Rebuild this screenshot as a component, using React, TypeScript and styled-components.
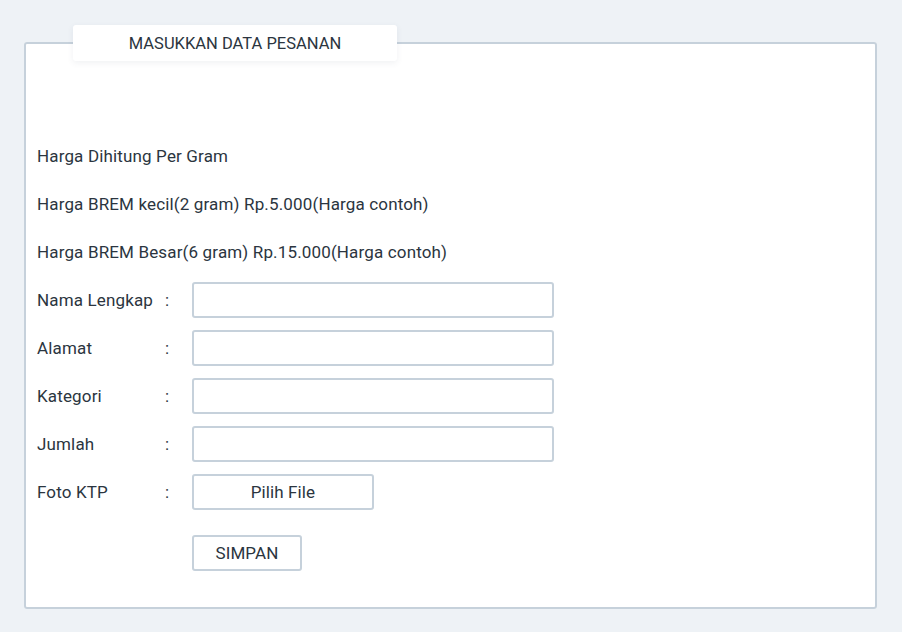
import React from "react";
import styled, { createGlobalStyle } from "styled-components";

const GlobalStyle = createGlobalStyle`
  html, body {
    margin: 0;
    padding: 0;
    background: #eef2f6;
    font-family: Roboto, "Open Sans", sans-serif;
    color: #2b3540;
  }
`;

const Page = styled.div`
  padding: 25px 25px 24px 24px;
`;

const Panel = styled.fieldset`
  margin: 0;
  width: 853px;
  box-sizing: border-box;
  border: 2px solid #c6d1db;
  border-radius: 3px;
  background: #fff;
  padding: 0 11px 30px 11px;
  min-width: 0;
`;

const Legend = styled.legend`
  box-sizing: border-box;
  width: 324px;
  height: 36px;
  margin-left: 36px;
  padding: 0;
  background: #fff;
  border-radius: 3px;
  box-shadow: 0 2px 6px rgba(60, 80, 100, 0.08);
  display: flex;
  align-items: center;
  justify-content: center;
  font-size: 16.5px;
`;

const Content = styled.div`
  padding-top: 71px;
  display: flex;
  flex-direction: column;
  font-size: 17px;
  letter-spacing: 0.15px;
`;

const Info = styled.p`
  margin: 0;
  height: 48px;
  line-height: 48px;
`;

const Row = styled.div<{ $gap?: number }>`
  display: grid;
  grid-template-columns: 128px 27px 1fr;
  align-items: center;
  height: 48px;
  margin-top: ${(p) => p.$gap ?? 0}px;
`;

const Label = styled.span``;

const Colon = styled.span``;

const Input = styled.input`
  box-sizing: border-box;
  width: 362px;
  height: 36px;
  border: 2px solid #c6d1db;
  border-radius: 3px;
  background: #fff;
  font: inherit;
  outline: none;
  padding: 0 8px;
`;

const Button = styled.button<{ $w: number }>`
  box-sizing: border-box;
  width: ${(p) => p.$w}px;
  height: 36px;
  border: 2px solid #c6d1db;
  border-radius: 3px;
  background: #fff;
  color: #2b3540;
  font-family: inherit;
  font-size: 17px;
  letter-spacing: 0.1px;
  padding: 0;
  cursor: pointer;
`;

const fields = ["Nama Lengkap", "Alamat", "Kategori", "Jumlah"];

export default function App() {
  return (
    <>
      <GlobalStyle />
      <Page>
        <Panel>
          <Legend>MASUKKAN DATA PESANAN</Legend>
          <Content>
            <Info>Harga Dihitung Per Gram</Info>
            <Info>Harga BREM kecil(2 gram) Rp.5.000(Harga contoh)</Info>
            <Info>Harga BREM Besar(6 gram) Rp.15.000(Harga contoh)</Info>
            {fields.map((f) => (
              <Row key={f}>
                <Label>{f}</Label>
                <Colon>:</Colon>
                <Input type="text" />
              </Row>
            ))}
            <Row>
              <Label>Foto KTP</Label>
              <Colon>:</Colon>
              <div>
                <Button $w={182}>Pilih File</Button>
              </div>
            </Row>
            <Row $gap={13}>
              <Label />
              <Colon />
              <div>
                <Button $w={110}>SIMPAN</Button>
              </div>
            </Row>
          </Content>
        </Panel>
      </Page>
    </>
  );
}
